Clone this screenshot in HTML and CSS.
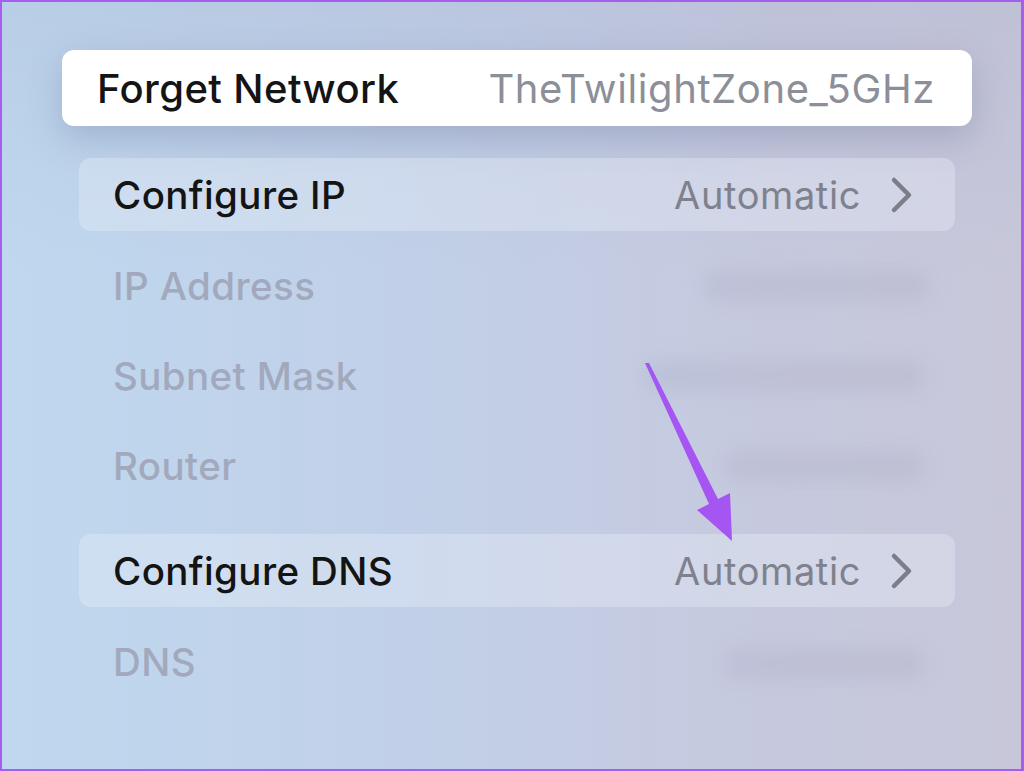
FILE: index.html
```html
<!DOCTYPE html>
<html>
<head>
<meta charset="utf-8">
<link rel="stylesheet" href="styles.css">
</head>
<body>
<div class="frame">
  <div class="list">
    <div class="card">
      <span class="label">Forget Network</span>
      <span class="value">TheTwilightZone_5GHz</span>
    </div>
    <div class="row row-ip">
      <span class="label">Configure IP</span>
      <span class="value">Automatic</span>
      <svg class="chev" width="30" height="40" viewBox="0 0 30 40"><path d="M8 5 L23 20 L8 35" fill="none" stroke="#7b7e88" stroke-width="4.5" stroke-linecap="round" stroke-linejoin="round"/></svg>
    </div>
    <div class="plain">
      <span class="label dim">IP Address</span>
      <span class="blur b1"></span>
    </div>
    <div class="plain">
      <span class="label dim">Subnet Mask</span>
      <span class="blur b2"></span>
    </div>
    <div class="plain">
      <span class="label dim">Router</span>
      <span class="blur b3"></span>
    </div>
    <div class="row row-dns">
      <span class="label">Configure DNS</span>
      <span class="value">Automatic</span>
      <svg class="chev" width="30" height="40" viewBox="0 0 30 40"><path d="M8 5 L23 20 L8 35" fill="none" stroke="#7b7e88" stroke-width="4.5" stroke-linecap="round" stroke-linejoin="round"/></svg>
    </div>
    <div class="plain plain-dns">
      <span class="label dim">DNS</span>
      <span class="blur b4"></span>
    </div>
  </div>
  <svg class="arrow" width="1024" height="771" viewBox="0 0 1024 771">
    <polygon points="645,363 649,363 718,499 730,493 732,541 697,510 709,504" fill="#a555f1"/>
  </svg>
</div>
</body>
</html>
```
FILE: styles.css
```css
* { box-sizing: border-box; }
html, body { margin: 0; padding: 0; }
body {
  width: 1024px;
  height: 771px;
  overflow: hidden;
  font-family: "Inter", "Liberation Sans", sans-serif;
}
.frame {
  position: relative;
  width: 1024px;
  height: 771px;
  border: 2px solid #a55ef0;
  border-right-width: 3px;
  background:
    linear-gradient(180deg, rgba(160,170,200,0.22) 0%, rgba(160,170,200,0) 35%),
    linear-gradient(90deg, #bfd8ef 0%, #c1d0e8 40%, #c6c9de 75%, #c8c7da 100%);
  overflow: hidden;
}
.list {
  display: flex;
  flex-direction: column;
  padding-top: 48px;
  padding-left: 60px;
}
.card {
  width: 910px;
  height: 76px;
  background: #fff;
  border-radius: 12px;
  box-shadow: 0 12px 34px rgba(90,100,140,0.28);
  display: flex;
  align-items: center;
  justify-content: space-between;
  padding: 0 37px 0 35px;
}
.label {
  font-size: 38.5px;
  font-weight: 500;
  color: #141414;
  letter-spacing: 0.4px;
}
.value {
  font-size: 38px;
  font-weight: 400;
  color: #8d8f98;
  letter-spacing: 0.6px;
}
.card .label { font-size: 40px; }
.card .value { font-size: 40px; }
.row {
  width: 876px;
  height: 73px;
  margin-left: 17px;
  background: rgba(235,240,250,0.35);
  border-radius: 12px;
  display: flex;
  align-items: center;
  padding: 0 39px 0 34px;
}
.row .label { flex: 1; }
.row .value { color: #7f828d; margin-right: 25px; }
.chev { display: block; }
.row-ip { margin-top: 32px; }
.row-dns { margin-top: 23px; }
.plain {
  position: relative;
  height: 90px;
  margin-left: 17px;
  width: 876px;
  display: flex;
  align-items: center;
  padding-left: 34px;
}
.row-ip + .plain { margin-top: 10px; }
.plain-dns { margin-top: 10px; }
.dim { color: #a2a9bd; }
.blur {
  position: absolute;
  height: 30px;
  border-radius: 15px;
  background: rgba(150,152,175,0.18);
  filter: blur(9px);
}
.b1 { left: 625px; width: 225px; top: 30px; }
.b2 { left: 565px; width: 280px; top: 30px; }
.b3 { left: 645px; width: 200px; top: 30px; }
.b4 { left: 645px; width: 200px; top: 32px; }
.arrow {
  position: absolute;
  left: -2px;
  top: -2px;
  pointer-events: none;
}
```
